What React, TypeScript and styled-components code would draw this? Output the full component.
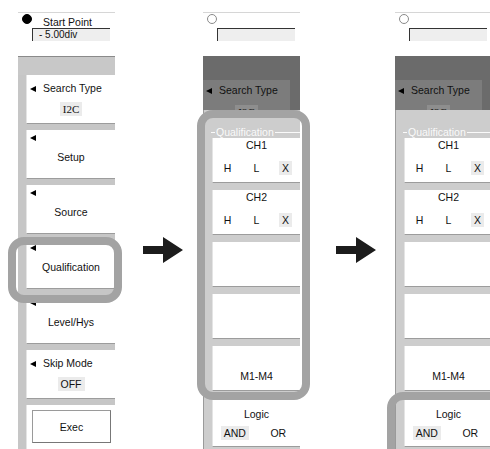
import React from "react";
import styled, { createGlobalStyle } from "styled-components";

const GlobalStyle = createGlobalStyle`
  body {
    margin: 0;
    background: #fff;
  }
`;

const Screen = styled.div`
  display: flex;
  align-items: flex-start;
  width: 490px;
  height: 449px;
  overflow: hidden;
  padding: 12px 0 0 18px;
  box-sizing: border-box;
  font-family: "Liberation Sans", Arial, sans-serif;
  font-size: 10.5px;
  color: #111;
`;

const Panel = styled.div`
  position: relative;
  flex: 0 0 97px;
  height: 437px;
  display: flex;
  flex-direction: column;
  background: #c6c6c6;
`;

const TopArea = styled.div`
  flex: 0 0 44px;
  background: #fff;
  border-top: 1px solid #d6d6d6;
  box-sizing: border-box;
  padding-left: 4px;
`;

const TopRow = styled.div`
  height: 15px;
  display: flex;
  align-items: flex-start;
`;

const Lamp = styled.div<{ $on?: boolean }>`
  width: 10px;
  height: 10px;
  margin-top: 1px;
  border-radius: 50%;
  box-sizing: border-box;
  background: ${(p) => (p.$on ? "#000" : "#fff")};
  border: 1px solid ${(p) => (p.$on ? "#000" : "#8a8a8a")};
`;

const TopLabel = styled.span`
  margin: 4px 0 0 11px;
  line-height: 11px;
  font-size: 10.5px;
`;

const ValueBox = styled.div`
  margin-left: 10px;
  width: 78px;
  height: 13px;
  box-sizing: border-box;
  background: #eeeeee;
  border-top: 1px solid #333;
  border-left: 1px solid #333;
  padding-left: 6px;
  line-height: 12px;
  font-size: 10px;
`;

const GrayBand = styled.div`
  flex: 0 0 19px;
  box-sizing: border-box;
  border-top: 1px solid #8a8a8a;
  background: #c8c8c8;
`;

const ButtonList = styled.div<{ $gap: number; $top?: number }>`
  display: flex;
  flex-direction: column;
  gap: ${(p) => p.$gap}px;
  margin: ${(p) => p.$top ?? 0}px 0 0 8px;
`;

const Cell = styled.div<{ $h: number }>`
  flex: 0 0 ${(p) => p.$h}px;
  height: ${(p) => p.$h}px;
  box-sizing: border-box;
  background: #fff;
  border-left: 1px solid #e4e4e4;
  border-bottom: 1px solid #9c9c9c;
  display: flex;
  flex-direction: column;
  align-items: center;
`;

const Tri = styled.span`
  display: inline-block;
  width: 0;
  height: 0;
  border-top: 3.5px solid transparent;
  border-bottom: 3.5px solid transparent;
  border-right: 6px solid #000;
`;

const CornerRow = styled.div`
  align-self: stretch;
  height: 11px;
  padding: 5px 0 0 3px;
  box-sizing: border-box;
  display: flex;
`;

const InlineHead = styled.div<{ $top: number }>`
  align-self: stretch;
  display: flex;
  align-items: center;
  gap: 7px;
  padding: ${(p) => p.$top}px 0 0 3px;
  line-height: 13px;
  font-size: 10.5px;
`;

const CenterLabel = styled.div<{ $top: number }>`
  margin-top: ${(p) => p.$top}px;
  line-height: 13px;
  font-size: 10.5px;
`;

const Chip = styled.span<{ $serif?: boolean; $top?: number }>`
  margin-top: ${(p) => p.$top ?? 0}px;
  background: #ebebeb;
  padding: 0 3px;
  line-height: 14px;
  font-family: ${(p) =>
    p.$serif ? `"Liberation Serif", "Times New Roman", serif` : `inherit`};
  font-size: ${(p) => (p.$serif ? 11 : 10.5)}px;
`;

const ExecBox = styled.div`
  align-self: stretch;
  margin: 5px 4px 0 5px;
  height: 33px;
  box-sizing: border-box;
  border: 1px solid #9a9a9a;
  border-right-color: #777;
  border-bottom-color: #777;
  display: flex;
  align-items: center;
  justify-content: center;
`;

const DarkBand = styled.div`
  flex: 0 0 54px;
  box-sizing: border-box;
  background: #6b6b6b;
  padding-top: 24px;
`;

/* the dimmed main menu behind the sub menu; its value chip is half covered */
const DimBox = styled.div`
  width: 87px;
  height: 30px;
  overflow: hidden;
  background: #7c7c7c;
  display: flex;
  flex-direction: column;
  align-items: center;
`;

const DimChip = styled.span`
  margin-top: 8px;
  background: #8e8e8e;
  padding: 0 3px;
  line-height: 14px;
  font-family: "Liberation Serif", "Times New Roman", serif;
  font-size: 11px;
`;

const SubMenu = styled.div`
  flex: 1;
  background: #cdcdcd;
  border-left: 1px solid #9a9a9a;
  padding-top: 17px;
`;

const GroupHead = styled.div`
  height: 11px;
  display: flex;
  align-items: center;
  padding-left: 7px;
  color: #fafafa;
  font-size: 10.5px;
  line-height: 11px;
`;

const GroupLine = styled.span<{ $grow?: boolean }>`
  height: 1px;
  background: #fafafa;
  width: 4px;
  flex: ${(p) => (p.$grow ? 1 : "0 0 4px")};
  margin: ${(p) => (p.$grow ? "0 0 0 1px" : "0 1px 0 0")};
`;

const Levels = styled.div<{ $cols: number; $top: number }>`
  align-self: stretch;
  margin-top: ${(p) => p.$top}px;
  display: grid;
  grid-template-columns: repeat(${(p) => p.$cols}, 1fr);
  justify-items: center;
  line-height: 14px;
  font-size: 10.5px;
`;

const Plain = styled.span`
  padding: 0 3px;
`;

const Highlight = styled.div<{
  $top: number;
  $left: number;
  $w: number;
  $h: number;
}>`
  position: absolute;
  top: ${(p) => p.$top}px;
  left: ${(p) => p.$left}px;
  width: ${(p) => p.$w}px;
  height: ${(p) => p.$h}px;
  box-sizing: border-box;
  border: 8px solid #a3a3a3;
  border-radius: 16px;
  pointer-events: none;
`;

const ArrowSlot = styled.div<{ $w: number; $pad: number }>`
  flex: 0 0 ${(p) => p.$w}px;
  box-sizing: border-box;
  padding: 225px 0 0 ${(p) => p.$pad}px;
`;

const Arrow = () => (
  <svg width="40" height="26" viewBox="0 0 40 26">
    <polygon points="0,9 20,9 20,0 40,13 20,26 20,17 0,17" fill="#1c1c1c" />
  </svg>
);

const SideButton = ({
  label,
  value,
}: {
  label: string;
  value?: string;
}) => (
  <Cell $h={49}>
    {value ? (
      <>
        <InlineHead $top={7}>
          <Tri />
          {label}
        </InlineHead>
        <Chip $serif={value === "I2C"} $top={7}>
          {value}
        </Chip>
      </>
    ) : (
      <>
        <CornerRow>
          <Tri />
        </CornerRow>
        <CenterLabel $top={10}>{label}</CenterLabel>
      </>
    )}
  </Cell>
);

const LevelButton = ({ ch }: { ch: string }) => (
  <Cell $h={45}>
    <CenterLabel $top={1}>{ch}</CenterLabel>
    <Levels $cols={3} $top={9}>
      <Plain>H</Plain>
      <Plain>L</Plain>
      <Chip>X</Chip>
    </Levels>
  </Cell>
);

const QualifyPanel = ({ logicMark }: { logicMark?: boolean }) => (
  <Panel>
    <TopArea>
      <TopRow>
        <Lamp />
      </TopRow>
      <ValueBox />
    </TopArea>
    <DarkBand>
      <DimBox>
        <InlineHead $top={4}>
          <Tri />
          Search Type
        </InlineHead>
        <DimChip>I2C</DimChip>
      </DimBox>
    </DarkBand>
    <SubMenu>
      <GroupHead>
        <GroupLine />
        Qualification
        <GroupLine $grow />
      </GroupHead>
      <ButtonList $gap={7}>
        <LevelButton ch="CH1" />
        <LevelButton ch="CH2" />
        <Cell $h={45} />
        <Cell $h={45} />
        <Cell $h={45}>
          <CenterLabel $top={24}>M1-M4</CenterLabel>
        </Cell>
      </ButtonList>
      <ButtonList $gap={0} $top={8}>
        <Cell $h={48}>
          <CenterLabel $top={9}>Logic</CenterLabel>
          <Levels $cols={2} $top={5}>
            <Chip>AND</Chip>
            <Plain>OR</Plain>
          </Levels>
        </Cell>
      </ButtonList>
    </SubMenu>
    {logicMark ? (
      <Highlight $top={380} $left={-8} $w={120} $h={80} />
    ) : (
      <Highlight $top={98} $left={-6} $w={113} $h={290} />
    )}
  </Panel>
);

export default function App() {
  return (
    <>
      <GlobalStyle />
      <Screen>
        <Panel>
          <TopArea>
            <TopRow>
              <Lamp $on />
              <TopLabel>Start Point</TopLabel>
            </TopRow>
            <ValueBox>- 5.00div</ValueBox>
          </TopArea>
          <GrayBand />
          <ButtonList $gap={6}>
            <SideButton label="Search Type" value="I2C" />
            <SideButton label="Setup" />
            <SideButton label="Source" />
            <SideButton label="Qualification" />
            <SideButton label="Level/Hys" />
            <SideButton label="Skip Mode" value="OFF" />
            <Cell $h={49}>
              <ExecBox>Exec</ExecBox>
            </Cell>
          </ButtonList>
          <Highlight $top={225} $left={-10} $w={114} $h={66} />
        </Panel>
        <ArrowSlot $w={88} $pad={28}>
          <Arrow />
        </ArrowSlot>
        <QualifyPanel />
        <ArrowSlot $w={95} $pad={36}>
          <Arrow />
        </ArrowSlot>
        <QualifyPanel logicMark />
      </Screen>
    </>
  );
}
